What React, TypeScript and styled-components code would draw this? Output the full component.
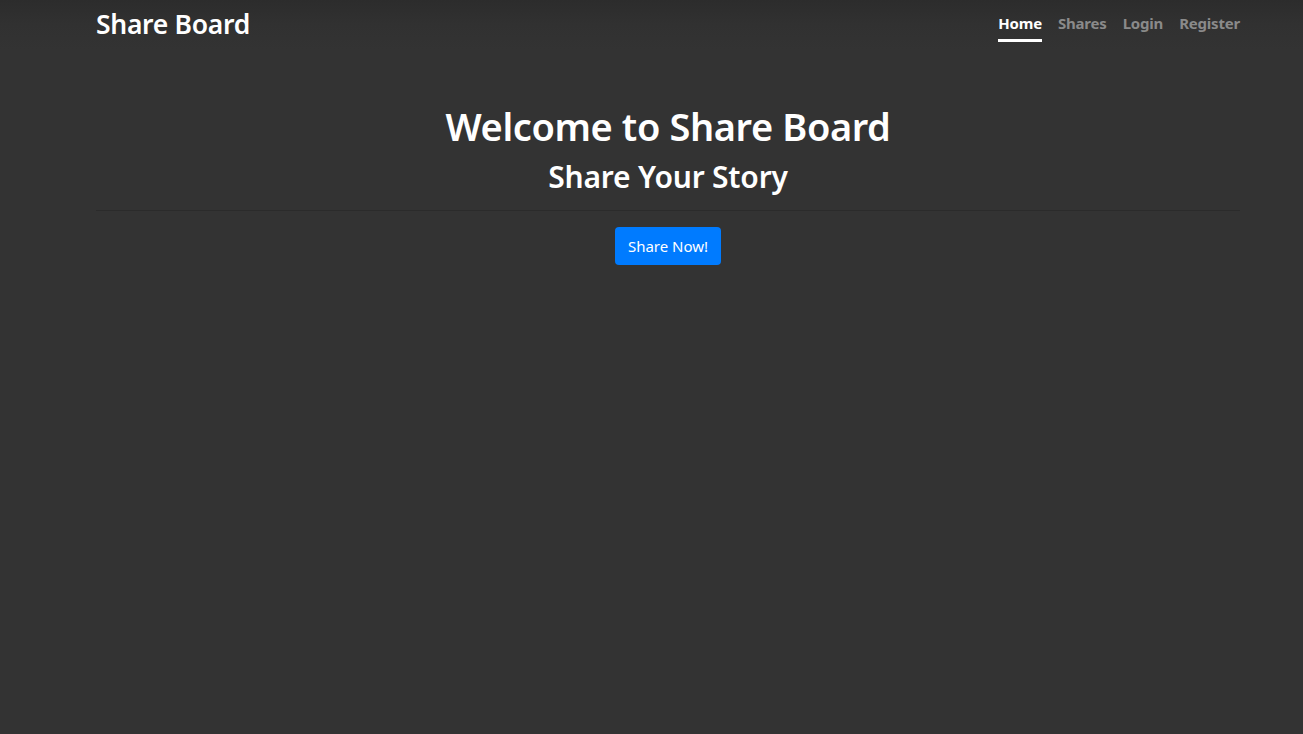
import React from "react";
import styled, { createGlobalStyle } from "styled-components";

const Global = createGlobalStyle`
  html, body { margin: 0; padding: 0; background: #333333; }
  body { font-family: "Noto Sans", "Open Sans", sans-serif; color: #fff; }
`;

const Page = styled.div`
  min-height: 734px;
  background: #333333;
`;

const NavBar = styled.nav`
  background: linear-gradient(to bottom, #2c2c2c 0px, #313131 25px, #333333 50px);
  height: 50px;
`;

const Inner = styled.div`
  box-sizing: border-box;
  width: 1144px;
  margin-left: 96px;
`;

const NavInner = styled(Inner)`
  height: 100%;
  display: flex;
  align-items: center;
  justify-content: space-between;
`;

const Brand = styled.a`
  font-size: 26.5px;
  font-weight: 600;
  color: #fff;
  text-decoration: none;
  letter-spacing: -0.3px;
  margin-top: -2px;
`;

const NavList = styled.ul`
  list-style: none;
  display: flex;
  gap: 16px;
  margin: 0;
  padding: 0 0 5px;
  align-self: stretch;
  box-sizing: border-box;
`;

const NavItem = styled.li<{ $active?: boolean }>`
  display: flex;
  align-items: center;
  position: relative;
  font-size: 15px;
  font-weight: 700;
  color: ${(p) => (p.$active ? "#ffffff" : "#8a8a8a")};
  letter-spacing: -0.2px;
  &::after {
    content: "";
    display: ${(p) => (p.$active ? "block" : "none")};
    position: absolute;
    left: 0;
    right: 0;
    top: 39px;
    height: 3px;
    background: #fff;
  }
`;

const Hero = styled(Inner)`
  display: flex;
  flex-direction: column;
  align-items: center;
  padding-top: 50px;
`;

const Title = styled.h1`
  margin: 0;
  font-size: 38px;
  font-weight: 600;
  line-height: 52px;
  letter-spacing: -0.4px;
`;

const Subtitle = styled.h2`
  margin: 5px 0 0;
  font-size: 30px;
  font-weight: 600;
  line-height: 40px;
  letter-spacing: -0.2px;
`;

const Rule = styled.hr`
  align-self: stretch;
  border: 0;
  border-top: 1px solid #2b2b2b;
  margin: 13px 0 16px;
`;

const Button = styled.button`
  font-family: inherit;
  font-size: 15px;
  color: #fff;
  background: #007bff;
  border: 0;
  border-radius: 4px;
  height: 38px;
  padding: 0 13px;
  cursor: pointer;
`;

export default function App() {
  return (
    <Page>
      <Global />
      <NavBar>
        <NavInner>
          <Brand href="#">Share Board</Brand>
          <NavList>
            <NavItem $active>Home</NavItem>
            <NavItem>Shares</NavItem>
            <NavItem>Login</NavItem>
            <NavItem>Register</NavItem>
          </NavList>
        </NavInner>
      </NavBar>
      <Hero>
        <Title>Welcome to Share Board</Title>
        <Subtitle>Share Your Story</Subtitle>
        <Rule />
        <Button>Share Now!</Button>
      </Hero>
    </Page>
  );
}
